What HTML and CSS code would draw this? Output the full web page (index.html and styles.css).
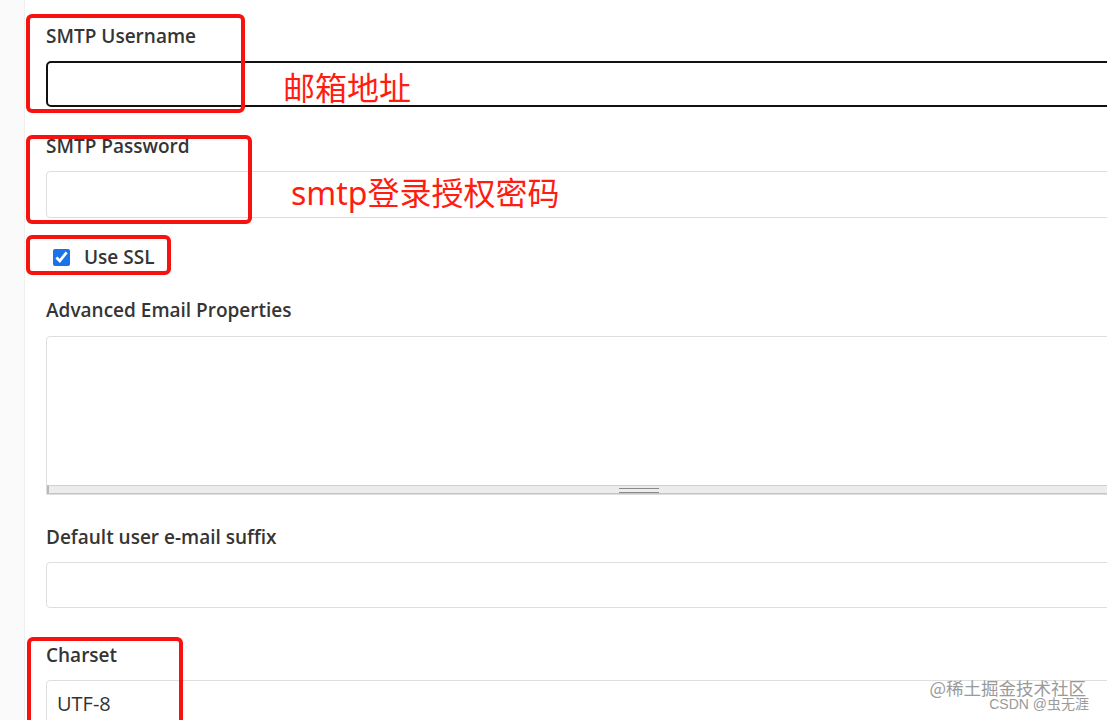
FILE: index.html
```html
<!DOCTYPE html>
<html lang="en">
<head>
  <meta charset="UTF-8">
  <title>Email Notification</title>
  <link rel="stylesheet" href="styles.css">
</head>
<body>
  <div class="page">
    <aside class="side-strip"></aside>

    <main class="config">
      <div class="field field-user">
        <label class="field-label" for="smtpUser">SMTP Username</label>
        <input class="field-input focused" id="smtpUser" type="text">
      </div>

      <div class="field field-pass">
        <label class="field-label" for="smtpPass">SMTP Password</label>
        <input class="field-input" id="smtpPass" type="password">
      </div>

      <div class="check-row">
        <input class="check" id="useSsl" type="checkbox" checked>
        <label for="useSsl">Use SSL</label>
      </div>

      <div class="field field-props">
        <label class="field-label" for="props">Advanced Email Properties</label>
        <div class="textarea-box">
          <textarea id="props" class="area"></textarea>
          <div class="hscroll"><span class="grip"></span></div>
        </div>
      </div>

      <div class="field field-suffix">
        <label class="field-label" for="suffix">Default user e-mail suffix</label>
        <input class="field-input" id="suffix" type="text">
      </div>

      <div class="field">
        <label class="field-label" for="charset">Charset</label>
        <input class="field-input" id="charset" type="text" value="UTF-8">
      </div>
    </main>

    <!-- annotations drawn over the screenshot -->
    <div class="mark mark-user"></div>
    <div class="mark mark-pass"></div>
    <div class="mark mark-ssl"></div>
    <div class="mark mark-charset"></div>
    <div class="note note-user">邮箱地址</div>
    <div class="note note-pass">smtp登录授权密码</div>

    <div class="watermark">
      <div class="wm-big">@稀土掘金技术社区</div>
      <div class="wm-small">CSDN @虫无涯</div>
    </div>
  </div>
</body>
</html>
```

FILE: styles.css
```css
:root {
  --label-color: #353535;
  --field-border: #dedede;
  --mark-red: #f5120f;
}

body {
  margin: 0;
  padding: 0;
  background: #fff;
  font-family: 'Open Sans', 'Noto Sans', sans-serif;
  overflow: hidden;
}

.page {
  position: relative;
  display: flex;
  width: 1107px;
  height: 720px;
  overflow: hidden;
}

.side-strip {
  flex: 0 0 24px;
  background: #fafafa;
  border-right: 1px solid #efefef;
}

.config {
  flex: 0 0 1120px;
  padding: 22px 0 0 21px;
  box-sizing: border-box;
}

.field {
  margin-bottom: 25px;
}

.field-pass {
  margin-bottom: 26px;
}

.field-props {
  margin-bottom: 28px;
}

.field-suffix {
  margin-bottom: 33px;
}

.field-label {
  display: block;
  font-size: 19px;
  font-weight: 600;
  line-height: 26px;
  color: var(--label-color);
  padding-top: 1px;
  margin-bottom: 12px;
}

.field-props .field-label {
  margin-bottom: 13px;
}

.field-input {
  display: block;
  width: 100%;
  height: 47px;
  border: 1px solid var(--field-border);
  border-radius: 4px;
  box-sizing: border-box;
  padding: 0 10px;
  font-family: 'Open Sans', 'Noto Sans', sans-serif;
  font-size: 20px;
  color: #333;
  background: #fff;
}

.field-input.focused {
  height: 46px;
  border: 2px solid #111;
  border-radius: 5px;
}

.field-suffix .field-input {
  height: 46px;
}

.check-row {
  display: flex;
  align-items: center;
  gap: 14px;
  height: 26px;
  margin: 0 0 26px 7px;
  font-size: 19px;
  font-weight: 600;
  color: var(--label-color);
}

.check {
  width: 17px;
  height: 17px;
  margin: 0;
  accent-color: #1a73e8;
}

.textarea-box {
  height: 159px;
  border: 1px solid var(--field-border);
  border-radius: 4px 4px 0 0;
  box-sizing: border-box;
  display: flex;
  flex-direction: column;
}

.area {
  flex: 1;
  border: none;
  resize: none;
  outline: none;
  background: transparent;
}

.hscroll {
  height: 7px;
  background: #ececec;
  border-top: 1px solid #d0d0d0;
  border-bottom: 1px solid #c4c4c4;
  border-left: 2px solid #b8b8b8;
  position: relative;
}

.grip {
  position: absolute;
  left: 570px;
  top: 2px;
  width: 40px;
  height: 3px;
  border-top: 1px solid #8a8a8a;
  border-bottom: 1px solid #8a8a8a;
}

/* red annotation boxes */
.mark {
  position: absolute;
  border: 4px solid var(--mark-red);
  border-radius: 6px;
  box-sizing: border-box;
}

.mark-user    { left: 26px; top: 14px;  width: 219px; height: 99px; }
.mark-pass    { left: 26px; top: 135px; width: 226px; height: 89px; }
.mark-ssl     { left: 26px; top: 235px; width: 145px; height: 40px; }
.mark-charset { left: 27px; top: 637px; width: 156px; height: 100px; }

.note {
  position: absolute;
  font-family: 'Noto Sans', 'Noto Sans CJK SC', sans-serif;
  font-size: 32px;
  line-height: 40px;
  color: #ff1d12;
}

.note-user { left: 283px; top: 68px; }
.note-pass { left: 291px; top: 173px; }

.watermark {
  position: absolute;
  right: 18px;
  bottom: 8px;
  text-align: right;
  color: #9a9a9a;
  font-family: 'Noto Sans CJK SC', sans-serif;
}

.wm-big {
  font-size: 17.5px;
  line-height: 18px;
  margin-right: 3px;
}

.wm-small {
  font-size: 14px;
  line-height: 15px;
  font-family: 'Liberation Sans', 'Noto Sans CJK SC', sans-serif;
}
```
